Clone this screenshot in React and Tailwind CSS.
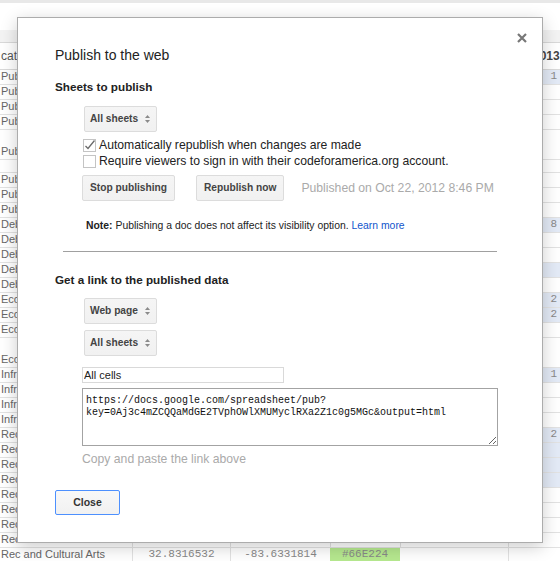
import React from 'react';

const rows = [
  { t: 'Public Safety', h: 'h-[15px]', blue: true, n: '1' },
  { t: 'Public Safety', h: 'h-[15px]' },
  { t: 'Public Safety', h: 'h-[15px]' },
  { t: 'Public Safety', h: 'h-[15px]' },
  { t: 'Public Safety', h: 'h-[30px]' },
  { t: '', h: 'h-[13px]' },
  { t: 'Public Safety', h: 'h-[15px]' },
  { t: 'Public Safety', h: 'h-[15px]' },
  { t: 'Public Safety', h: 'h-[15px]' },
  { t: 'Debt Service', h: 'h-[15px]', blue: true, n: '8' },
  { t: 'Debt Service', h: 'h-[15px]' },
  { t: 'Debt Service', h: 'h-[15px]' },
  { t: 'Debt Service', h: 'h-[15px]', blue: true },
  { t: 'Debt Service', h: 'h-[15px]' },
  { t: 'Economic Development', h: 'h-[15px]', blue: true, n: '2' },
  { t: 'Economic Development', h: 'h-[15px]', blue: true, n: '2' },
  { t: 'Economic Development', h: 'h-[15px]' },
  { t: 'Economic Development', h: 'h-[30px]' },
  { t: 'Infrastructure', h: 'h-[15px]', blue: true, n: '1' },
  { t: 'Infrastructure', h: 'h-[15px]' },
  { t: 'Infrastructure', h: 'h-[15px]' },
  { t: 'Infrastructure', h: 'h-[15px]' },
  { t: 'Rec and Cultural Arts', h: 'h-[15px]', blue: true, n: '2' },
  { t: 'Rec and Cultural Arts', h: 'h-[15px]', blue: true },
  { t: 'Rec and Cultural Arts', h: 'h-[15px]', blue: true },
  { t: 'Rec and Cultural Arts', h: 'h-[15px]', blue: true },
  { t: 'Rec and Cultural Arts', h: 'h-[15px]' },
  { t: 'Rec and Cultural Arts', h: 'h-[15px]' },
  { t: 'Rec and Cultural Arts', h: 'h-[15px]' },
  { t: 'Rec and Cultural Arts', h: 'h-[15px]' },
];

const mono = { fontFamily: '"Liberation Mono", monospace' };

const Arrows = () => (
  <svg width="5" height="10" viewBox="0 0 5 10">
    <path d="M0 4 L2.5 1 L5 4 Z" fill="#8a8a8a" />
    <path d="M0 6 L2.5 9 L5 6 Z" fill="#8a8a8a" />
  </svg>
);

const Select = ({ label }) => (
  <div className="flex h-[26px] w-fit items-center gap-[7px] rounded-[2px] border border-[#dcdcdc] bg-gradient-to-b from-[#f5f5f5] to-[#f1f1f1] pl-[5px] pr-[6px] text-[10.2px] font-bold text-[#444]">
    <span>{label}</span>
    <Arrows />
  </div>
);

const Button = ({ label }) => (
  <div className="flex h-[26px] items-center rounded-[2px] border border-[#dcdcdc] bg-gradient-to-b from-[#f5f5f5] to-[#f1f1f1] px-[7px] text-[10.2px] font-bold text-[#444]">
    {label}
  </div>
);

const Checkbox = ({ checked }) => (
  <svg width="13" height="13" viewBox="0 0 13 13" className="shrink-0">
    <rect x="0.5" y="0.5" width="12" height="12" fill="#fff" stroke="#c4c4c4" />
    {checked && <path d="M2.5 7 L5 9.5 L11.5 1.5" fill="none" stroke="#6a6a6a" strokeWidth="1.3" />}
  </svg>
);

export default function App() {
  return (
    <div
      className="relative h-[561px] w-[560px] overflow-hidden bg-white"
      style={{ fontFamily: '"Liberation Sans", Arial, sans-serif' }}
    >
      {/* Spreadsheet behind the dialog */}
      <div className="h-[3px] bg-[#e8e8e8]"></div>
      <div className="h-[27px]"></div>
      <div className="h-[13px] border-b border-[#d9d9d9] bg-[#f3f3f3]"></div>
      <div className="flex h-[27px] items-center border-b border-[#d9d9d9] text-[12px] text-[#555]">
        <div className="w-[132px] pl-[1px]">category</div>
        <div className="w-[98px]"></div>
        <div className="w-[100px]"></div>
        <div className="w-[70px]"></div>
        <div className="w-[108px]"></div>
        <div className="flex-1 pl-[25px] font-bold text-[#444]">2013</div>
      </div>
      {rows.map((r, i) => (
        <div key={i} className={`flex ${r.h} border-b border-[#e2e2e2] text-[11px] text-[#666]`}>
          <div className="flex w-[132px] items-end pb-[1px] pl-[1px] leading-[13px]">{r.t}</div>
          <div className="w-[98px] border-l border-[#e2e2e2]"></div>
          <div className="w-[100px] border-l border-[#e2e2e2]"></div>
          <div className="w-[70px] border-l border-[#e2e2e2]"></div>
          <div className="w-[108px] border-l border-[#e2e2e2]"></div>
          <div
            className={`flex flex-1 items-end justify-end border-l border-[#e2e2e2] pb-[1px] pr-[3px] leading-[13px] text-[#888] ${r.blue ? 'bg-[#e3eaf6]' : ''}`}
            style={mono}
          >
            {r.n}
          </div>
        </div>
      ))}
      <div className="flex h-[15px] border-b border-[#e2e2e2] text-[11px] text-[#666]">
        <div className="flex w-[132px] items-end pb-[1px] pl-[1px] leading-[13px]">Rec and Cultural Arts</div>
        <div className="flex w-[98px] items-end justify-center border-l border-[#e2e2e2] pb-[1px] leading-[13px] text-[#888]" style={mono}>
          32.8316532
        </div>
        <div className="flex w-[100px] items-end justify-center border-l border-[#e2e2e2] pb-[1px] leading-[13px] text-[#888]" style={mono}>
          -83.6331814
        </div>
        <div className="flex w-[70px] items-end justify-center bg-[#b6e88f] pb-[1px] leading-[13px] text-[#888]" style={mono}>
          #66E224
        </div>
        <div className="w-[108px]"></div>
        <div className="flex-1 border-l border-[#e2e2e2]"></div>
      </div>

      {/* Publish dialog */}
      <div className="absolute left-[17px] top-[17px] h-[526px] w-[526px] border border-[#acacac] bg-white pl-[37px] pt-[27px] text-[#222] shadow-[0_4px_16px_rgba(0,0,0,0.2)]">
        <svg className="absolute left-[499px] top-[15px]" width="10" height="10" viewBox="0 0 10 10">
          <path d="M1 1 L9 9 M9 1 L1 9" stroke="#777" strokeWidth="2.2" />
        </svg>

        <div className="h-[20px] text-[14px] leading-[20px]">Publish to the web</div>

        <div className="mt-[14px] text-[11.7px] font-bold leading-[16px]">Sheets to publish</div>

        <div className="ml-[29px] mt-[11px]">
          <Select label="All sheets" />
        </div>

        <div className="ml-[28px] mt-[5px] text-[12.2px]">
          <div className="flex h-[16px] items-center gap-[3px]">
            <Checkbox checked />
            <span>Automatically republish when changes are made</span>
          </div>
          <div className="flex h-[16px] items-center gap-[3px]">
            <Checkbox />
            <span>Require viewers to sign in with their codeforamerica.org account.</span>
          </div>
        </div>

        <div className="ml-[27px] mt-[6px] flex items-center">
          <Button label="Stop publishing" />
          <div className="ml-[21px]">
            <Button label="Republish now" />
          </div>
          <span className="ml-[17px] text-[12.2px] text-[#aaa]">Published on Oct 22, 2012 8:46 PM</span>
        </div>

        <div className="ml-[31px] mt-[18px] text-[10.4px] leading-[14px]">
          <span className="font-bold">Note:</span> Publishing a doc does not affect its visibility option.{' '}
          <span className="text-[#1155cc]">Learn more</span>
        </div>

        <div className="ml-[8px] mt-[18px] h-px w-[434px] bg-[#a0a0a0]"></div>

        <div className="mt-[20px] text-[11.7px] font-bold leading-[16px]">Get a link to the published data</div>

        <div className="ml-[29px] mt-[10px]">
          <Select label="Web page" />
        </div>
        <div className="ml-[29px] mt-[6px]">
          <Select label="All sheets" />
        </div>

        <input
          readOnly
          value="All cells"
          className="ml-[27px] mt-[11px] block h-[16px] w-[202px] border border-[#d9d9d9] px-[1px] text-[11px] leading-[14px] text-[#222] outline-none"
        />

        <textarea
          readOnly
          defaultValue={'https://docs.google.com/spreadsheet/pub?\nkey=0Aj3c4mZCQQaMdGE2TVphOWlXMUMyclRXa2Z1c0g5MGc&output=html'}
          className="ml-[27px] mt-[5px] block h-[58px] w-[416px] border border-[#a3a3a3] px-[3px] pt-[6px] text-[10px] leading-[12px] text-[#111] outline-none"
          style={mono}
        />

        <div className="ml-[27px] mt-[5px] text-[12.2px] leading-[16px] text-[#aaa]">Copy and paste the link above</div>

        <div className="mt-[23px] flex h-[25px] w-[65px] items-center justify-center rounded-[2px] border border-[#4d90fe] bg-gradient-to-b from-[#f8f8f8] to-[#f1f1f1] text-[10.5px] font-bold text-[#333]">
          Close
        </div>
      </div>
    </div>
  );
}
